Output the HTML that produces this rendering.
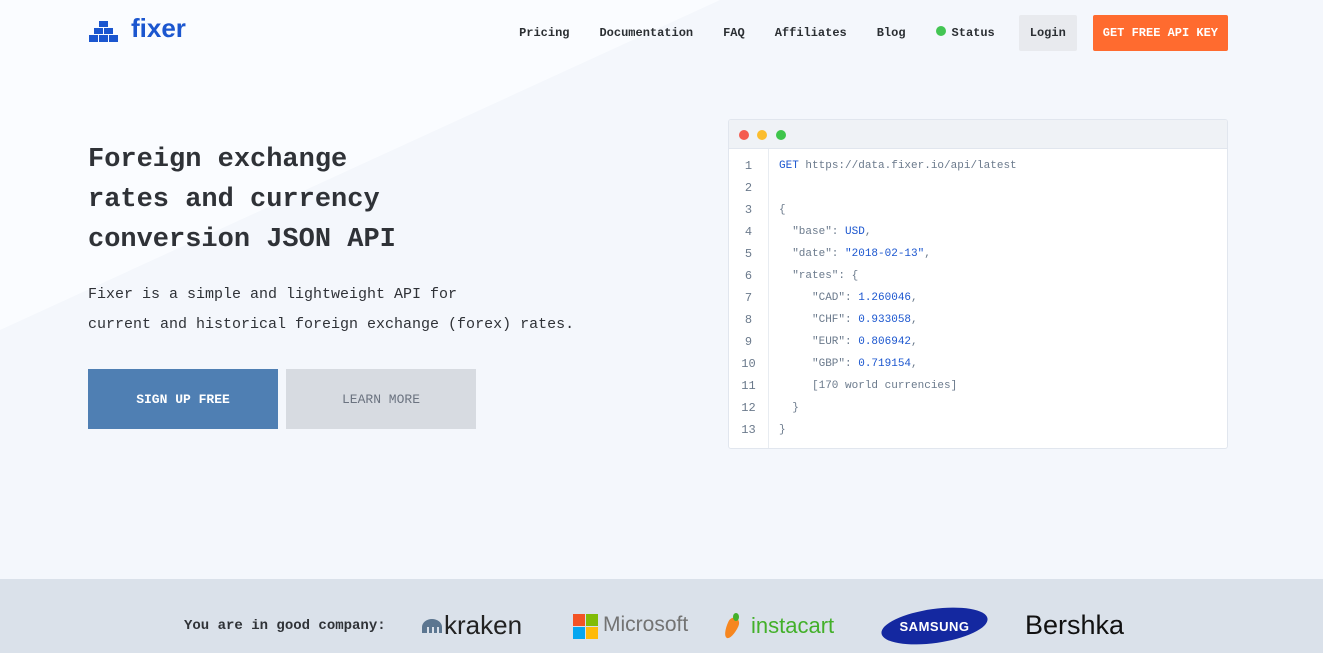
<!DOCTYPE html>
<html><head><meta charset="utf-8"><style>
*{margin:0;padding:0;box-sizing:border-box}
body{width:1323px;height:653px;overflow:hidden;background:#f4f7fc;font-family:"Liberation Mono",monospace;color:#2b2f33;position:relative}
.tri{position:absolute;left:0;top:0;width:1323px;height:600px;background:#fafcff;clip-path:polygon(0 0,720px 0,0 330px)}
.logo{position:absolute;left:88px;top:17px;display:flex;align-items:center;color:#1b56cf;font-family:"Liberation Sans",sans-serif;font-weight:bold;font-size:26px}
nav{position:absolute;top:15px;right:95px;display:flex;align-items:center;font-size:12px;font-weight:bold;color:#2b2f33}
nav span{margin-left:30px}
.login{background:#e8eaee;padding:11px 11px;margin-left:24px!important;border-radius:2px}
.key{background:#ff6b2f;color:#fff;padding:11px 10px;margin-left:16px!important;border-radius:2px}
h1{position:absolute;left:88px;top:140px;font-size:27px;line-height:40px;font-weight:bold;color:#2f3237}
.p{position:absolute;left:88px;top:280px;font-size:15px;line-height:30px;color:#2f3237}
.btn{position:absolute;top:369px;width:190px;height:60px;display:flex;align-items:center;justify-content:center;font-size:13px;font-weight:bold}
.code{position:absolute;left:728px;top:119px;width:500px;height:330px;background:#fff;border:1px solid #e1e6ee;border-radius:3px;overflow:hidden}
.bar{height:29px;background:#eff2f6;border-bottom:1px solid #e1e6ee;position:relative}
.dot{position:absolute;top:10px;width:10px;height:10px;border-radius:50%}
.gut{position:absolute;left:0;top:29px;bottom:0;width:40px;border-right:1px solid #e8ecf1;text-align:center;color:#6b7a8c}
.ln{font-size:11px;line-height:22px}
.body{position:absolute;left:50px;top:35px;color:#6b7a8c;white-space:pre}
.v{color:#1b56cf}
.foot{position:absolute;left:0;top:579px;width:1323px;height:74px;background:#dae1ea}
</style></head><body>
<div class="tri"></div>
<div class="logo"><svg width="32" height="26" viewBox="0 0 32 26"><g fill="#1b56cf"><rect x="11" y="3" width="9" height="6"/><rect x="6" y="10" width="9" height="6"/><rect x="16" y="10" width="9" height="6"/><rect x="1" y="17" width="9" height="7"/><rect x="11" y="17" width="9" height="7"/><rect x="21" y="17" width="9" height="7"/></g></svg><span style="margin-left:11px;margin-top:-4px">fixer</span></div>
<nav><span>Pricing</span><span>Documentation</span><span>FAQ</span><span>Affiliates</span><span>Blog</span><span><b style="display:inline-block;width:10px;height:10px;border-radius:50%;background:#43c553;margin-right:6px"></b>Status</span><span class="login">Login</span><span class="key">GET FREE API KEY</span></nav>
<h1>Foreign exchange<br>rates and currency<br>conversion JSON API</h1>
<div class="p">Fixer is a simple and lightweight API for<br>current and historical foreign exchange (forex) rates.</div>
<div class="btn" style="left:88px;background:#4f7fb3;color:#fff">SIGN UP FREE</div>
<div class="btn" style="left:286px;background:#d7dbe1;color:#6b7380;font-weight:normal">LEARN MORE</div>
<div class="code"><div class="bar"><div class="dot" style="left:10px;background:#f45b4f"></div><div class="dot" style="left:28px;background:#fbbd2e"></div><div class="dot" style="left:47px;background:#3ec54b"></div></div>
<div class="gut ln" style="padding-top:6px;font-size:12px">1<br>2<br>3<br>4<br>5<br>6<br>7<br>8<br>9<br>10<br>11<br>12<br>13</div>
<div class="body ln"><span class="v">GET</span> https://data.fixer.io/api/latest

{
  "base": <span class="v">USD</span>,
  "date": <span class="v">"2018-02-13"</span>,
  "rates": {
     "CAD": <span class="v">1.260046</span>,
     "CHF": <span class="v">0.933058</span>,
     "EUR": <span class="v">0.806942</span>,
     "GBP": <span class="v">0.719154</span>,
     [170 world currencies]
  }
}</div></div>
<div class="foot">
<div style="position:absolute;left:184px;top:39px;font-size:14px;font-weight:bold;color:#2f3237">You are in good company:</div>
<div style="position:absolute;left:422px;top:31px;display:flex;align-items:center;font-family:'Liberation Sans',sans-serif;font-size:26px;color:#222"><svg width="20" height="14" viewBox="0 0 20 14" style="margin-right:2px"><path d="M0 14V8a10 8 0 0 1 20 0v6h-3V8h-2v6h-3V8h-2v6H7V8H5v6z" fill="#5c7690"/></svg>kraken</div>
<div style="position:absolute;left:573px;top:35px;width:25px;height:25px;display:grid;grid-template-columns:1fr 1fr;gap:1px"><i style="background:#f35325"></i><i style="background:#81bc06"></i><i style="background:#05a6f0"></i><i style="background:#ffba08"></i></div>
<div style="position:absolute;left:603px;top:34px;font-family:'Liberation Sans',sans-serif;font-size:21px;color:#737373">Microsoft</div>
<div style="position:absolute;left:726px;top:38px;width:11px;height:22px;background:#f6861f;border-radius:50% 50% 50% 50%/30% 30% 70% 70%;transform:rotate(25deg)"></div>
<div style="position:absolute;left:733px;top:34px;width:6px;height:8px;background:#43b02a;border-radius:50%"></div>
<div style="position:absolute;left:751px;top:34px;font-family:'Liberation Sans',sans-serif;font-size:22px;color:#43b02a">instacart</div>
<div style="position:absolute;left:881px;top:30px;width:107px;height:34px;background:#1428a0;border-radius:50%;transform:rotate(-8deg)"></div>
<div style="position:absolute;left:881px;top:30px;width:107px;height:34px;color:#fff;font-family:'Liberation Sans',sans-serif;font-weight:bold;font-size:13px;display:flex;align-items:center;justify-content:center;letter-spacing:0.5px">SAMSUNG</div>
<div style="position:absolute;left:1025px;top:31px;font-family:'Liberation Sans',sans-serif;font-size:27px;color:#111">Bershka</div>
</div>
</body></html>
